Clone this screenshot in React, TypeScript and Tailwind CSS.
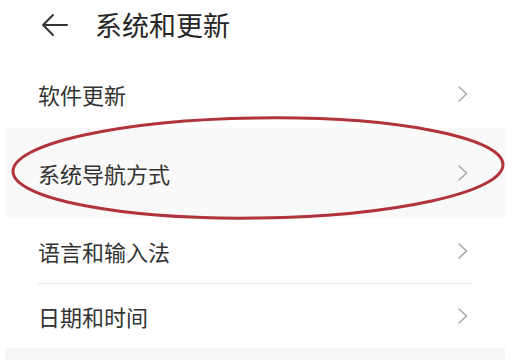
import React from 'react';

const Chevron = () => (
  <svg width="12" height="18" viewBox="0 0 12 18" fill="none" className="shrink-0">
    <path d="M2 2 L9.5 9 L2 16" stroke="#a8a8a8" strokeWidth="1.6" strokeLinecap="round" strokeLinejoin="round" />
  </svg>
);

const Row = ({ label, h, bg, divider }: { label: string; h: string; bg?: string; divider?: boolean }) => (
  <div className={`${h} ${bg ?? 'bg-white'} flex items-center pl-[33px] pr-[36px] relative`}>
    <span className="text-[22px] text-[#333] leading-none flex-1">{label}</span>
    <Chevron />
    {divider && <div className="absolute left-[33px] right-[33px] bottom-0 h-px bg-[#e6e6e6]" />}
  </div>
);

const App = () => {
  return (
    <div
      className="w-[518px] h-[360px] bg-white overflow-hidden relative"
      style={{ fontFamily: '"Noto Sans CJK SC", "Noto Sans", sans-serif' }}
    >
      {/* 顶栏 */}
      <div className="h-[60px] flex items-start pt-[9px] pl-[41px]">
        <svg width="28" height="24" viewBox="0 0 28 24" fill="none" className="mt-[4px]">
          <path d="M26 12 H2 M12 2 L2 12 L12 22" stroke="#333" strokeWidth="2" strokeLinecap="round" strokeLinejoin="round" />
        </svg>
        <span className="ml-[26px] text-[27px] text-[#262626] leading-[32px]">系统和更新</span>
      </div>
      {/* 列表 */}
      <div className="pl-[5px] pr-[13px]">
        <Row label="软件更新" h="h-[68px]" />
        <Row label="系统导航方式" h="h-[90px]" bg="bg-[#f9f9f9]" />
        <Row label="语言和输入法" h="h-[66px]" divider />
        <Row label="日期和时间" h="h-[64px]" />
        <div className="h-[20px] bg-[#f6f6f6]" />
      </div>
      {/* 红色圈注 */}
      <svg className="absolute left-0 top-0 pointer-events-none" width="518" height="360" viewBox="0 0 518 360">
        <ellipse cx="258" cy="168" rx="245" ry="50" transform="rotate(-0.8 258 168)" fill="none" stroke="#b1333b" strokeWidth="3" />
      </svg>
    </div>
  );
};

export default App;
